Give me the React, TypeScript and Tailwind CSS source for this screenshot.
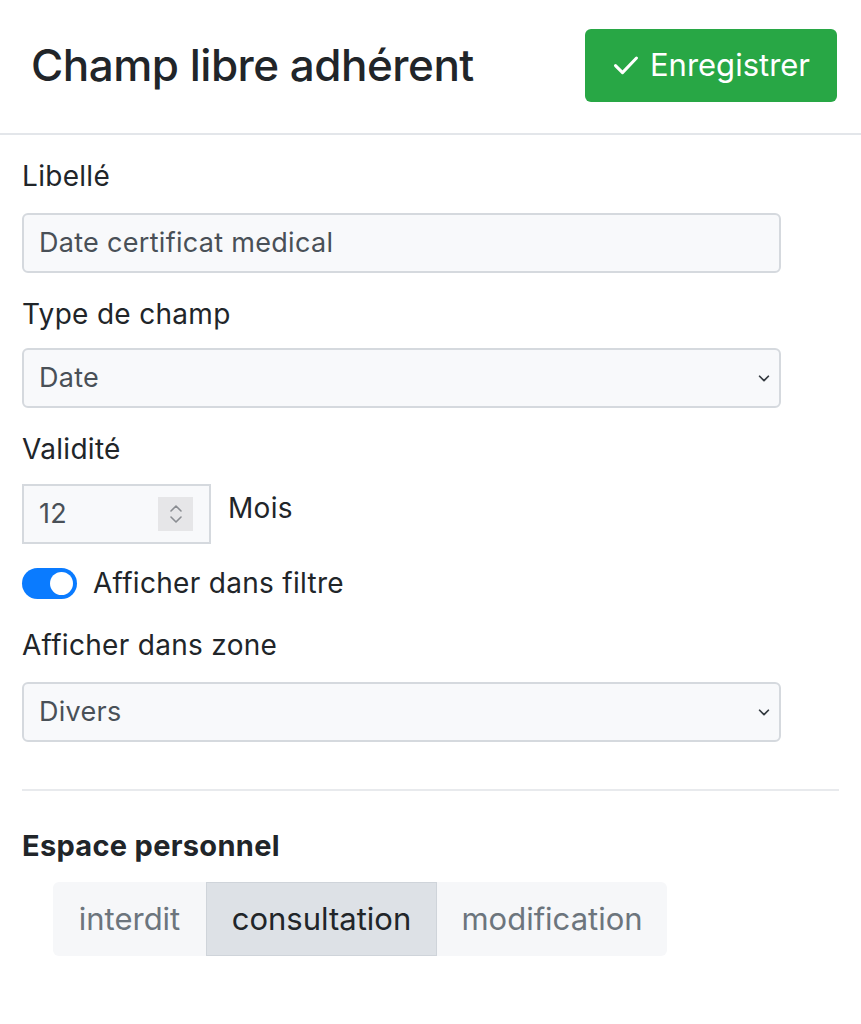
import { useState } from "react";

const font = { fontFamily: "Inter, 'Liberation Sans', sans-serif" };

function Chevron() {
  return (
    <svg width="14" height="14" viewBox="0 0 16 16" className="shrink-0">
      <path d="M3 6l5 5 5-5" fill="none" stroke="#343a40" strokeWidth="2" strokeLinecap="round" strokeLinejoin="round" />
    </svg>
  );
}

function Select({ value }: { value: string }) {
  return (
    <div className="flex h-[60px] w-[759px] items-center justify-between rounded-[6px] border-2 border-[#d5d9de] bg-[#f8f9fb] pl-[15px] pr-[8px] text-[27px] text-[#495057]">
      <span>{value}</span>
      <Chevron />
    </div>
  );
}

export default function App() {
  const [filter, setFilter] = useState(true);
  const [mode, setMode] = useState("consultation");

  return (
    <div className="h-[1024px] w-[861px] bg-white text-[#212529]" style={font}>
      <div className="flex h-[135px] items-center justify-between border-b-2 border-[#e3e6ea] pl-[31px] pr-[24px] pb-[3px]">
        <h1 className="text-[44px] font-medium tracking-[-0.5px]">Champ libre adhérent</h1>
        <button className="flex h-[73px] w-[252px] items-center justify-center gap-[10px] rounded-[6px] bg-[#28a745] text-[31px] text-white">
          <svg width="28" height="28" viewBox="0 0 24 24">
            <path d="M3 12.5l6 6L21 6" fill="none" stroke="white" strokeWidth="2.6" strokeLinecap="round" strokeLinejoin="round" />
          </svg>
          Enregistrer
        </button>
      </div>

      <div className="px-[22px] pt-[24px] tracking-[0.3px]">
        <div className="text-[28px] leading-[34px]">Libellé</div>
        <div className="mt-[20px] flex h-[60px] w-[759px] items-center rounded-[6px] border-2 border-[#d5d9de] bg-[#f8f9fb] pl-[15px] text-[27px] text-[#495057]">
          Date certificat medical
        </div>

        <div className="mt-[24px] text-[28px] leading-[34px]">Type de champ</div>
        <div className="mt-[17px]">
          <Select value="Date" />
        </div>

        <div className="mt-[24px] text-[28px] leading-[34px]">Validité</div>
        <div className="mt-[18px] flex items-start gap-[17px]">
          <div className="flex h-[60px] w-[189px] items-center justify-between border-2 border-[#d5d9de] bg-[#f8f9fb] pl-[15px] pr-[16px] text-[27px] text-[#495057]">
            <span>12</span>
            <div className="flex h-[34px] w-[35px] flex-col items-center justify-center bg-[#e6e6e8]">
              <svg width="16" height="24" viewBox="0 0 16 24">
                <path d="M3 9l5-5 5 5M3 15l5 5 5-5" fill="none" stroke="#8a8d92" strokeWidth="1.6" strokeLinecap="round" strokeLinejoin="round" />
              </svg>
            </div>
          </div>
          <span className="pt-[7px] text-[28px] leading-[34px]">Mois</span>
        </div>

        <div className="mt-[22px] flex items-center gap-[16px]">
          <button
            onClick={() => setFilter((v) => !v)}
            className={`flex h-[31px] w-[55px] items-center rounded-full px-[4px] ${filter ? "justify-end bg-[#0a7bff]" : "justify-start bg-[#ced4da]"}`}
          >
            <span className="h-[23px] w-[23px] rounded-full bg-white" />
          </button>
          <span className="text-[28px] leading-[34px]">Afficher dans filtre</span>
        </div>

        <div className="mt-[28px] text-[28px] leading-[34px]">Afficher dans zone</div>
        <div className="mt-[20px]">
          <Select value="Divers" />
        </div>

        <div className="mt-[47px] w-[817px] border-t-2 border-[#e8eaed]" />

        <div className="mt-[38px] text-[29px] font-bold leading-[34px]">Espace personnel</div>
        <div className="ml-[31px] mt-[19px] flex h-[74px] w-[614px] overflow-hidden rounded-[6px] bg-[#f6f7f9] text-[31px] tracking-normal">
          {["interdit", "consultation", "modification"].map((m) => (
            <button
              key={m}
              onClick={() => setMode(m)}
              className={`flex items-center justify-center ${
                mode === m ? "border border-[#cfd4da] bg-[#dde1e6] text-[#212529]" : "text-[#6c757d]"
              } ${m === "interdit" ? "w-[153px]" : m === "consultation" ? "w-[231px]" : "w-[230px]"}`}
            >
              {m}
            </button>
          ))}
        </div>
      </div>
    </div>
  );
}
